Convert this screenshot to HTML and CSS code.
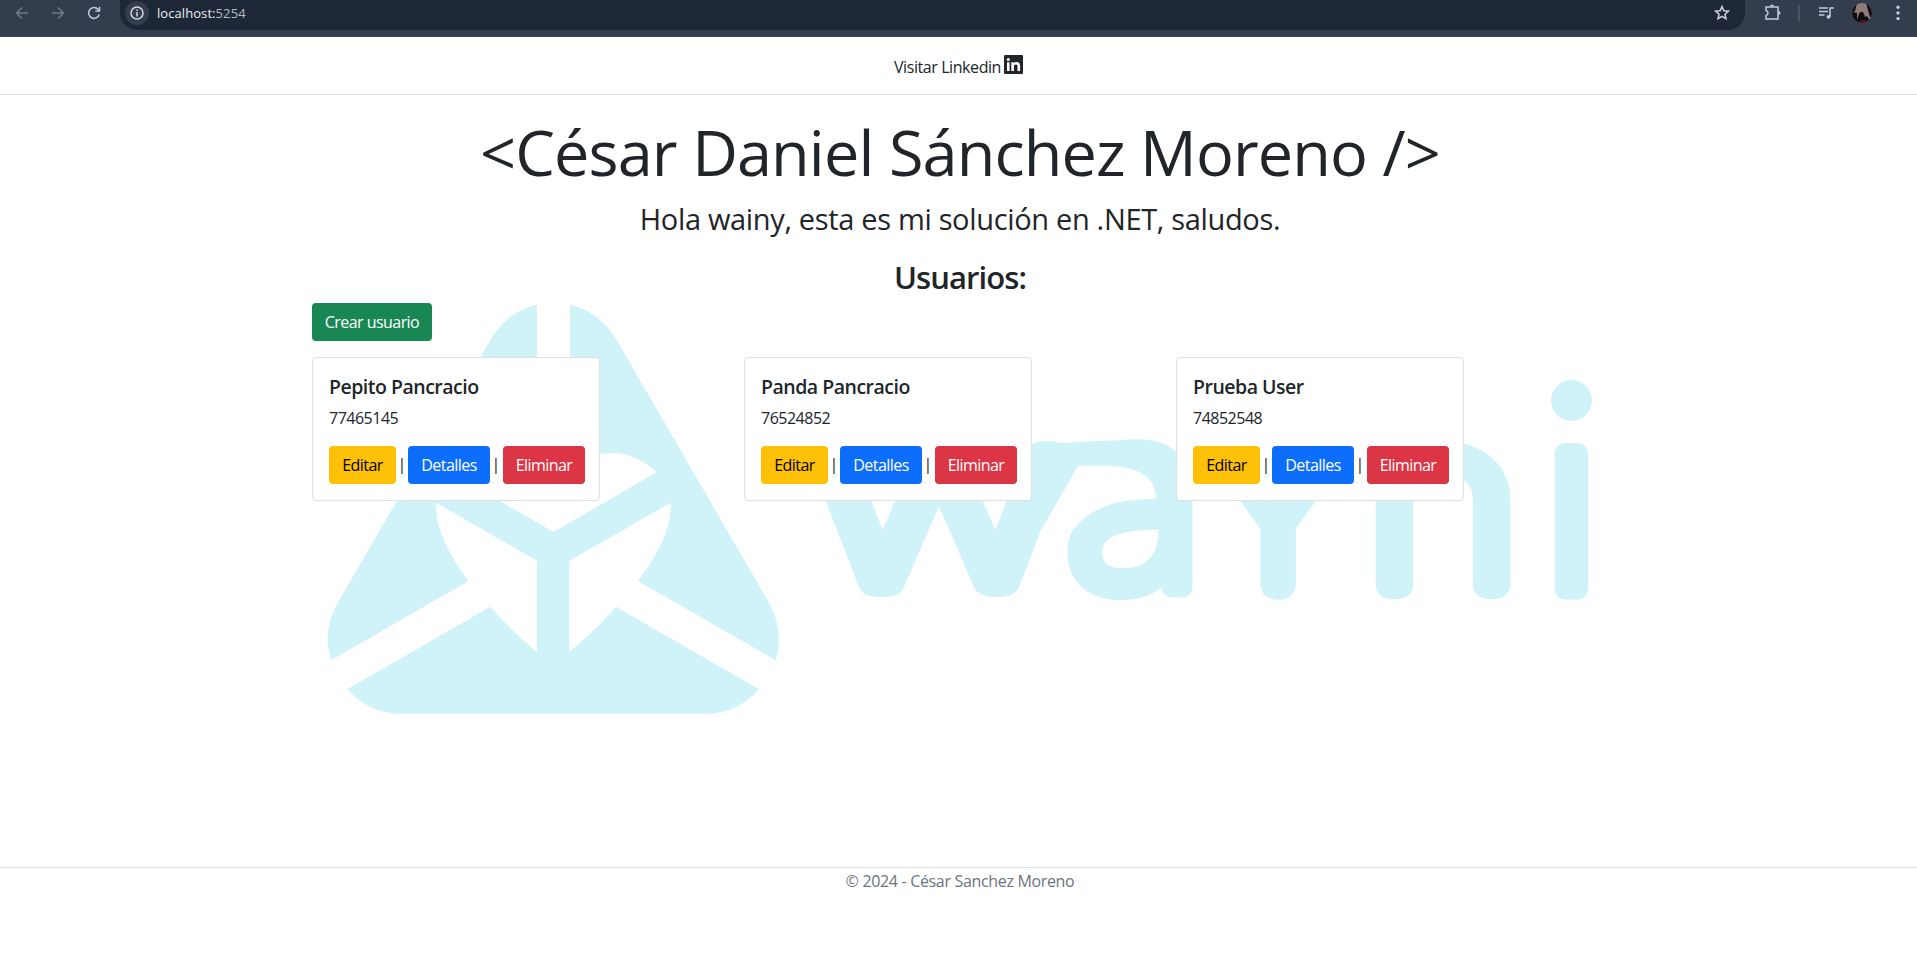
FILE: index.html
```html
<!DOCTYPE html>
<html lang="es">
<head>
<meta charset="utf-8">
<title>Usuarios</title>
<link rel="stylesheet" href="styles.css">
</head>
<body>
<div class="browser">
  <div class="nav-icons">
    <svg class="dim" width="16" height="16" viewBox="0 0 16 16"><path d="M14 8H3M8 2.500L2.500 8 8 13.500"/></svg>
    <svg class="dim" width="16" height="16" viewBox="0 0 16 16"><path d="M2 8h11M8 2.500L13.500 8 8 13.500"/></svg>
    <svg class="lit" width="16" height="16" viewBox="0 0 16 16"><path d="M13.200 9.500A5.400 5.400 0 1 1 12 4.300L13.500 6M13.500 1.800V6H9.300"/></svg>
  </div>
  <div class="omnibox">
    <span class="info"><svg width="14" height="14" viewBox="0 0 14 14"><circle cx="7" cy="7" r="6"/><path d="M7 6v4.500M7 3.500v1.500"/></svg></span>
    <span class="url">localhost:<span class="port">5254</span></span>
    <svg class="star" width="16" height="16" viewBox="0 0 16 16"><path d="M8 1.600l1.850 4.200 4.600.4-3.500 3 1.050 4.500L8 11.300l-4 2.400L5.050 9.200l-3.500-3 4.600-.4z"/></svg>
  </div>
  <div class="tools">
    <svg class="lit" width="18" height="18" viewBox="0 0 18 18"><path d="M2 4h12v12H2v-3.500c2.600-.5 2.600-4.500 0-5z"/><path class="solid" d="M6.200 3.500a1.900 2 0 0 1 3.800 0zM14.500 8a1.900 1.900 0 0 1 0 4z"/></svg>
    <span class="sep"></span>
    <svg class="lit" width="17" height="16" viewBox="0 0 17 16"><path d="M1 3h9M1 6.500h9M1 10h5.500M12 12V3h4"/><circle class="solid" cx="10.500" cy="11.800" r="1.900"/></svg>
    <svg class="avatar" width="20" height="20" viewBox="0 0 20 20"><defs><clipPath id="face"><circle cx="10" cy="10" r="10"/></clipPath></defs><g clip-path="url(#face)"><path fill="#8e7a76" d="M0 0h20v20H0z"/><path fill="#0d0b0d" d="M0 9l5 1v7l2-6c1-3 4-3 5 0l1 3 2-1 3 5v3H0zM14 0l4 14h2V0zM0 0h5L3 8 0 10z"/><path fill="#53191a" d="M8 17h6v3H8z"/></g></svg>
    <svg class="dots" width="4" height="16" viewBox="0 0 4 16"><circle cx="2" cy="2.200" r="1.700"/><circle cx="2" cy="8" r="1.700"/><circle cx="2" cy="13.600" r="1.700"/></svg>
  </div>
</div>

<div class="page">
  <header class="topbar">
    <a class="link">Visitar Linkedin</a>
    <svg class="linkedin" width="19" height="19" viewBox="0 0 19 19"><rect width="19" height="19" rx="1.200" fill="#212529"/><path fill="#fff" d="M3 7.300h2.600V16H3zM7.300 7.300h2.500v1.200c1.300-2.200 6.300-2 6.300 2.300V16h-2.600v-4.700c0-2.700-3.600-2.400-3.600 0V16H7.300z"/><circle fill="#fff" cx="4.300" cy="4.500" r="1.500"/></svg>
  </header>

  <svg class="watermark" width="1320" height="430" viewBox="300 290 1320 430">
    <g transform="translate(300 290) scale(.33333)">
      <path d="M810 44C870 58 915 92 950 150L1405 935C1440 995 1443 1055 1427 1111L1014 873C1080 785 1115 710 1112 638L808 812V1086C860 1043 905 1000 948 950L1377 1198C1337 1242 1285 1271 1222 1271H298C235 1271 182 1242 142 1198L571 950C615 1000 660 1045 711 1086V812L408 638C405 710 440 785 506 873L93 1111C77 1055 80 995 115 935L571 150C606 92 651 58 711 44V400H810Z"/>
      <path class="blank" d="M760 726L1070 547C1030 510 985 489 935 489C870 489 810 520 760 560C710 520 650 489 585 489C535 489 490 510 450 547Z"/>
    </g>
    <g class="word">
      <text class="wide" x="814" y="583" font-size="234" textLength="250" lengthAdjust="spacingAndGlyphs">w</text>
      <text class="light" x="1066" y="587" font-size="254" textLength="137" lengthAdjust="spacingAndGlyphs">a</text>
      <text x="1221" y="584" font-size="176" textLength="114" lengthAdjust="spacingAndGlyphs">Y</text>
      <text class="wide" x="1366" y="585" font-size="234" textLength="154" lengthAdjust="spacingAndGlyphs">n</text>
      <text class="light" x="1571.500" y="588.500" font-size="254" text-anchor="middle">i</text>
    </g>
    <path class="blank" d="M1078 466C1130 462 1157 470 1157 497C1120 498 1085 508 1070 535L1038 535Z"/>
    <path d="M1046 454Q1050 444 1061 443Q1110 440 1135 440Q1160 441 1176 457V500H1156C1156 468 1125 464 1078 466L1018 570L990 560L1035 475Z"/>
    <path class="blank" d="M1545 400H1600V443H1545Z"/>
    <circle cx="1571.500" cy="400.500" r="20.500"/>
  </svg>

  <main class="container">
    <h1>&lt;César Daniel Sánchez Moreno /&gt;</h1>
    <p class="lead">Hola wainy, esta es mi solución en .NET, saludos.</p>
    <h2>Usuarios:</h2>
    <a class="btn create">Crear usuario</a>
    <div class="grid">
      <article class="card">
        <h5>Pepito Pancracio</h5><p>77465145</p>
        <div class="actions"><a class="btn edit">Editar</a><span>|</span><a class="btn detail">Detalles</a><span>|</span><a class="btn remove">Eliminar</a></div>
      </article>
      <article class="card">
        <h5>Panda Pancracio</h5><p>76524852</p>
        <div class="actions"><a class="btn edit">Editar</a><span>|</span><a class="btn detail">Detalles</a><span>|</span><a class="btn remove">Eliminar</a></div>
      </article>
      <article class="card">
        <h5>Prueba User</h5><p>74852548</p>
        <div class="actions"><a class="btn edit">Editar</a><span>|</span><a class="btn detail">Detalles</a><span>|</span><a class="btn remove">Eliminar</a></div>
      </article>
    </div>
  </main>
  <footer>© 2024 - César Sanchez Moreno</footer>
</div>
</body>
</html>
```
FILE: styles.css
```css
* { box-sizing: border-box; }
html { overflow: hidden; }
body { margin: 0; height: 978px; overflow: hidden; background: #fff; color: #212529; font: 400 16px/24px "Segoe UI", "Open Sans", sans-serif; }
h1, h2, h5, p { margin: 0; white-space: nowrap; }
svg { display: block; flex: none; }

.browser { display: flex; width: 1917px; height: 37px; background: #343d4e; border-bottom: 1px solid #414855; }
.nav-icons { display: flex; gap: 20px; width: 120px; padding: 5px 0 0 14px; }
.browser svg { fill: none; stroke-width: 1.5; }
.dim { stroke: #737b8b; }
.lit { stroke: #c2cbe2; }
.browser .solid { fill: #c2cbe2; stroke: none; }
.omnibox { display: flex; width: 1626px; height: 30px; padding: 0 15px 0 5px; background: #1e2737; border-radius: 0 0 17px 17px; }
.info { display: flex; align-items: center; justify-content: center; width: 24px; height: 24px; margin-top: 1px; border-radius: 50%; background: #343d4e; }
.info svg { stroke: #d5d8df; }
.url { margin-left: 8px; font-size: 13px; line-height: 26px; letter-spacing: .08px; color: #eceef2; }
.port { color: #b4b8c0; }
.browser .star { margin: 5px 0 0 auto; stroke: #d0d3da; }
.tools { display: flex; flex: 1; padding: 3px 17px 0 19px; }
.sep { width: 2px; height: 16px; margin: 2px 18px 0 16px; background: #4c5567; }
.tools svg:nth-of-type(2) { margin-top: 2px; }
.avatar { margin-left: 17px; }
.browser .dots { margin: 2px 0 0 24px; fill: #c2cbe2; }

.page { position: relative; width: 1920px; }
.topbar { display: flex; justify-content: center; gap: 3px; height: 58px; padding: 18px 3px 0 0; border-bottom: 1px solid #dee2e6; }
.link { line-height: 24px; letter-spacing: -.42px; }
.watermark { position: absolute; left: 300px; top: 253px; fill: #cff3f8; }
.blank { fill: #fff; }
.word { font-family: Inter, sans-serif; font-weight: 100; stroke: #cff3f8; stroke-width: 31; stroke-linejoin: round; }
.wide { stroke-width: 28; }
.light { font-family: "Open Sans", sans-serif; font-weight: 300; stroke-width: 21; }
.container { position: relative; width: 1320px; margin: 0 auto; padding: 18px 12px 0; }
h1 { font-weight: 400; font-size: 63px; line-height: 77px; letter-spacing: -.88px; text-align: center; }
.lead { margin-top: 6px; font-weight: 400; font-size: 29px; line-height: 45px; letter-spacing: -.33px; text-align: center; }
h2 { margin-top: 17px; font-weight: 600; font-size: 31px; line-height: 38px; letter-spacing: -.9px; text-align: center; }
.btn { display: block; flex: none; height: 38px; border-radius: 4px; line-height: 38px; text-align: center; color: #fff; letter-spacing: -.55px; }
.create { width: 120px; margin-top: 7px; background: #198754; }
.grid { display: grid; grid-template-columns: repeat(3, 432px); margin-top: 16px; }
.card { width: 288px; height: 144px; padding: 17px 16px 16px; border: 1px solid #dfdfdf; border-radius: 4px; background: #fff; }
h5 { font-weight: 600; font-size: 19.5px; line-height: 24px; letter-spacing: -.5px; }
.card p { margin-top: 7px; letter-spacing: -.5px; }
.actions { display: flex; margin-top: 16px; }
.actions span { flex: none; width: 12px; text-align: center; line-height: 36px; }
.actions span + .remove { margin-left: 1px; }
.edit { width: 67px; background: #ffc107; color: #000; }
.detail { width: 82px; background: #0d6efd; }
.remove { width: 82px; background: #dc3545; }
footer { margin-top: 366px; border-top: 1px solid #dee2e6; text-align: center; line-height: 26px; color: #6c757d; letter-spacing: -.33px; }
```
